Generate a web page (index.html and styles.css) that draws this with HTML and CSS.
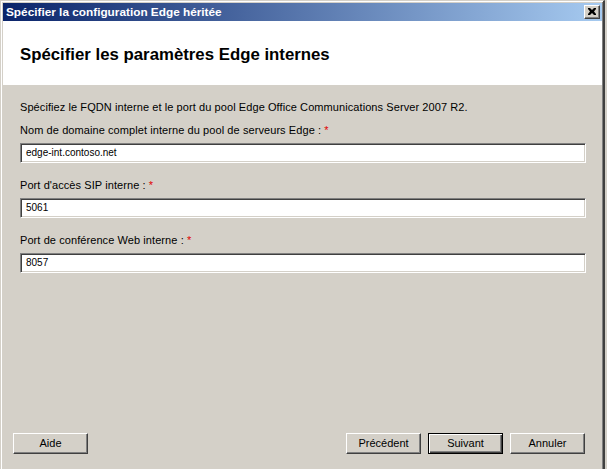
FILE: index.html
```html
<!DOCTYPE html>
<html lang="fr">
<head>
<meta charset="utf-8">
<title>Spécifier la configuration Edge héritée</title>
<link rel="stylesheet" href="styles.css">
</head>
<body>
<div class="window">
  <div class="titlebar">
    <span class="title">Spécifier la configuration Edge héritée</span>
    <span class="close">
      <svg width="8" height="7" viewBox="0 0 8 7"><path d="M0 0h2l2 2 2-2h2v1L6 3.5 8 6v1H6L4 5 2 7H0V6l2-2.5L0 1z" fill="#000"/></svg>
    </span>
  </div>
  <div class="header">
    <h1 class="heading">Spécifier les paramètres Edge internes</h1>
  </div>
  <div class="content">
    <p class="intro">Spécifiez le FQDN interne et le port du pool Edge Office Communications Server 2007 R2.</p>
    <div class="field">
      <label class="label">Nom de domaine complet interne du pool de serveurs Edge : <span class="req">*</span></label>
      <div class="input">edge-int.contoso.net</div>
    </div>
    <div class="field">
      <label class="label">Port d'accès SIP interne : <span class="req">*</span></label>
      <div class="input">5061</div>
    </div>
    <div class="field">
      <label class="label">Port de conférence Web interne : <span class="req">*</span></label>
      <div class="input">8057</div>
    </div>
  </div>
  <div class="footer">
    <button class="btn">Aide</button>
    <div class="spacer"></div>
    <button class="btn">Précédent</button>
    <button class="btn default">Suivant</button>
    <button class="btn">Annuler</button>
  </div>
</div>
</body>
</html>
```

FILE: styles.css
```css
html, body {
  margin: 0;
  padding: 0;
  background: #d4d0c8;
  overflow: hidden;
  width: 607px;
  height: 469px;
}

.window {
  box-sizing: border-box;
  width: 605px;
  height: 474px;
  background: #d4d0c8;
  border-style: solid;
  border-width: 1px 2px 2px 1px;
  border-color: #d4d0c8 #404040 #404040 #d4d0c8;
  box-shadow: inset 1px 1px 0 #ffffff, inset -1px -1px 0 #808080;
  padding: 2px 1px 1px 2px;
  display: flex;
  flex-direction: column;
  font-family: "Liberation Sans", Arial, sans-serif;
  font-size: 11px;
  color: #000;
}

.titlebar {
  height: 18px;
  flex: none;
  display: flex;
  align-items: center;
  background: linear-gradient(to right, #0a246a, #a6caf0);
  padding: 0 2px 0 3px;
}

.title {
  flex: 1;
  color: #fff;
  font-weight: bold;
  font-size: 11.8px;
  line-height: 18px;
  white-space: nowrap;
}

.close {
  box-sizing: border-box;
  width: 16px;
  height: 14px;
  background: #d4d0c8;
  border-style: solid;
  border-width: 1px;
  border-color: #ffffff #404040 #404040 #ffffff;
  box-shadow: inset -1px -1px 0 #808080;
  display: flex;
  align-items: center;
  justify-content: center;
  padding: 0 1px 1px 0;
}

.close svg {
  display: block;
}

.header {
  height: 64px;
  flex: none;
  background: #fff;
  display: flex;
  align-items: center;
  padding-left: 17px;
}

.heading {
  margin: 0;
  font-size: 16.8px;
  font-weight: bold;
  line-height: 20px;
  padding-top: 4px;
}

.content {
  flex: 1;
  padding: 16px 17px 0 17px;
}

.intro {
  margin: 0 0 10px;
  line-height: 13px;
  letter-spacing: 0.08px;
}

.field {
  display: flex;
  flex-direction: column;
  margin-bottom: 16px;
}

.label {
  line-height: 13px;
  margin-bottom: 6px;
  letter-spacing: 0.08px;
}

.req {
  color: #e00000;
}

.input {
  box-sizing: border-box;
  height: 20px;
  width: 566px;
  background: #fff;
  border-style: solid;
  border-width: 1px;
  border-color: #808080 #ffffff #ffffff #808080;
  box-shadow: inset 1px 1px 0 #404040, inset -1px -1px 0 #d4d0c8;
  padding: 0 5px;
  font-size: 10px;
  line-height: 18px;
}

.footer {
  flex: none;
  display: flex;
  align-items: center;
  gap: 7px;
  padding: 0 17px 17px 10px;
}

.spacer {
  flex: 1;
}

.btn {
  box-sizing: border-box;
  width: 75px;
  height: 21px;
  margin: 0;
  padding: 0 0 1px;
  background: #d4d0c8;
  font-family: "Liberation Sans", Arial, sans-serif;
  font-size: 11px;
  color: #000;
  border-style: solid;
  border-width: 1px;
  border-color: #ffffff #404040 #404040 #ffffff;
  box-shadow: inset -1px -1px 0 #808080;
  border-radius: 0;
}

.btn.default {
  border-color: #000;
  box-shadow: inset 1px 1px 0 #ffffff, inset -1px -1px 0 #404040, inset -2px -2px 0 #808080;
}
```
